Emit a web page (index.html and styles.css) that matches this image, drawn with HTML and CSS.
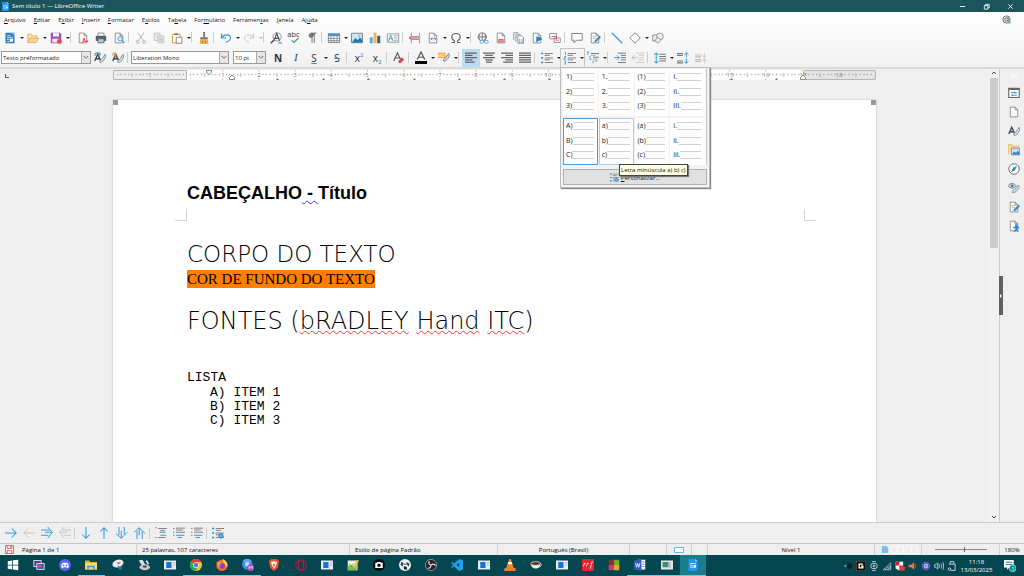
FILE: index.html
```html
<!DOCTYPE html>
<html lang="pt-BR">
<head>
<meta charset="utf-8">
<title>Sem título 1 — LibreOffice Writer</title>
<link rel="stylesheet" href="styles.css">
</head>
<body>
<svg class="sprite" aria-hidden="true">
<defs>
<g id="sheet"><path d="M3 1.500h6.500l3.500 3.500v9.500H3z" fill="#fafafa" stroke="#777"/><path d="M9.500 1.500V5H13" fill="none" stroke="#777"/></g>
<g id="new"><rect x="2" y="1" width="12" height="14" fill="#2b7fc3"/><path d="M10 1h4v4z" fill="#9ccbf0"/><path d="M4 5h5M4 7.500h8M4 10h3M4 12.500h8" stroke="#fff"/><rect x="8" y="9" width="4" height="3" fill="#fff"/></g>
<g id="open"><path d="M1 14V3h5l1 2h6v3" fill="#fbe0b6" stroke="#e8a33d"/><path d="M1 14l3-6h11.500l-3 6z" fill="#fcd79b" stroke="#e8a33d"/></g>
<g id="save"><path d="M1 1h12l2 2v12H1z" fill="#a34fb5"/><rect x="4" y="1.500" width="8" height="4.500" fill="#fff"/><rect x="3" y="9" width="10" height="5" fill="#f3e3f6"/><circle cx="12.500" cy="12.500" r="3.300" fill="#e64552"/></g>
<g id="pdf"><use href="#sheet"/><path d="M7 14c4-3 3-7 2-5s3 5 6 3" fill="none" stroke="#e23b3b" stroke-width="1.400"/></g>
<g id="print"><path d="M4 5V1.500h8V5" fill="#fff" stroke="#666"/><rect x="1" y="5" width="14" height="7" rx="1" fill="#5d6063"/><rect x="4" y="9" width="8" height="5.500" fill="#9dcbe9" stroke="#555"/></g>
<g id="preview"><use href="#sheet"/><circle cx="9.500" cy="9" r="3" fill="#d4eafa" stroke="#2f8fd3"/><path d="M12 11.500l3 3" stroke="#2f8fd3" stroke-width="1.500"/></g>
<g id="cut" fill="none" stroke="#b3b3b3" stroke-width="1.300"><path d="M4 1l7 10M12 1L5 11"/><circle cx="3.800" cy="13" r="2"/><circle cx="12.200" cy="13" r="2"/></g>
<g id="copy" fill="#e6e6e6" stroke="#bdbdbd"><path d="M1.500 1.500h8v10h-8z"/><path d="M6.500 5h8v9.500h-8z"/><path d="M8 8h5M8 10h5M8 12h5"/></g>
<g id="paste"><path d="M2 3h10v11.500H2z" fill="#fff" stroke="#e39a3c" stroke-width="1.300"/><path d="M4.500 4V2h5v2z" fill="#666"/><path d="M7 7h7.500v8H7z" fill="#fff" stroke="#666"/></g>
<g id="clone"><path d="M7 0h2.500v7H7z" fill="#777"/><path d="M3 7h10v3H3z" fill="#777"/><path d="M3 10h10l1 5.500H2z" fill="#f3a952"/><path d="M6 12v3.500M10 12v3.500" stroke="#b96c1c"/></g>
<g id="undo"><path d="M2 2v6h6M2 8c3-6 12-5 12 0 0 3-2 4-6 6" fill="none" stroke="#2f9bdc" stroke-width="1.500"/></g>
<g id="redo"><path d="M14 2v6H8M14 8C11 2 2 3 2 8c0 3 2 4 6 6" fill="none" stroke="#c4c4c4" stroke-width="1.200"/></g>
<g id="find"><path d="M5 12L9 2l4 10M7 8.500h5" fill="none" stroke="#444" stroke-width="1.400"/><circle cx="9.500" cy="6.500" r="5.500" fill="none" stroke="#777"/><path d="M5.500 10.500L1 15" stroke="#555" stroke-width="2"/><path d="M11 14.500h5" stroke="#2f8fd3" stroke-width="1.400"/></g>
<g id="spell"><text x="-1" y="6" font-size="10" fill="#333">abc</text><path d="M5 11l3 3 6-6" fill="none" stroke="#33a367" stroke-width="1.500"/></g>
<g id="pil"><path d="M12.500 1.500H6.500a3 3 0 000 6h1.500z" fill="#777"/><path d="M8 1.500v13M11 1.500v13M6 1.500h8" fill="none" stroke="#666" stroke-width="1.200"/></g>
<g id="table"><path d="M.5 2.500h15v11.500H.5z" fill="#fff" stroke="#666"/><path d="M0 2h16v3.500H0z" fill="#4596d1"/><path d="M0 8.500h16M0 11.500h16M4 5v9M8 5v9M12 5v9" stroke="#777"/></g>
<g id="image"><path d="M.7 1.700h14.600v12.600H.7z" fill="#c7e4f8" stroke="#666"/><path d="M1 14l5-6 3 3 3-4 3 4v3z" fill="#1f79bd"/><circle cx="11" cy="5" r="1.500" fill="#f1a840"/></g>
<g id="chart"><path d="M1 7h4v8H1z" fill="#5aaade"/><path d="M6 1h4v14H6z" fill="#f3b45c"/><path d="M11 5h4v10h-4z" fill="#555"/></g>
<g id="textbox"><path d="M.5 2.500h15v11H.5z" fill="#fff" stroke="#777"/><path d="M2 12L5 4l3 8M3 9h4" fill="none" stroke="#2585c8"/><path d="M9 5h5M9 8h5M9 11h5" stroke="#888"/></g>
<g id="break"><path d="M3 1v5h11V1M3 15v-5h11v5" fill="none" stroke="#777"/><path d="M0 8h15M3 6L.5 8 3 10" fill="none" stroke="#e23b3b" stroke-width="1.300"/></g>
<g id="field"><use href="#sheet"/><path d="M5 9h7M7 7L5 9l2 2M10 7l2 2-2 2" fill="none" stroke="#2585c8"/></g>
<g id="omega"><path d="M2 14h4v-2C0 8 2 2 8 2s8 6 2 10v2h4" fill="none" stroke="#666" stroke-width="1.400"/></g>
<g id="link"><circle cx="7" cy="6.500" r="5.500" fill="#eee" stroke="#666"/><path d="M2 6.500h10M7 1v11M4 2c-2 3-2 6 0 9M10 2c2 3 2 6 0 9" fill="none" stroke="#666"/><rect x="4" y="11" width="5" height="4" rx="2" fill="#fff" stroke="#2f8fd3"/><rect x="10" y="11" width="5" height="4" rx="2" fill="#fff" stroke="#2f8fd3"/></g>
<g id="footnote"><use href="#sheet"/><path d="M5 10h6v3H5z" fill="#f3a2a2" stroke="#e23b3b"/></g>
<g id="endnote"><path d="M1 11V1h6M4 13V3h6" fill="none" stroke="#777"/><path d="M6.500 5h5L14 7.500V15H6.500z" fill="#fff" stroke="#777"/><path d="M9 9v6M12 9v6" stroke="#2f8fd3"/></g>
<g id="bookmark"><use href="#sheet"/><path d="M7 6v8l3-2 5-2-2-3z" fill="#2585c8"/></g>
<g id="xref"><path d="M1 2h9v7H1zM7 8h8v6H7z" fill="#fff" stroke="#777"/><path d="M3 6h7v4" fill="none" stroke="#e23b3b"/><path d="M9 11h4" stroke="#e23b3b"/></g>
<g id="comment"><path d="M1 2h14v9H7l-3 3.500V11H1z" fill="#fff" stroke="#777" stroke-width="1.200"/></g>
<g id="track"><use href="#sheet"/><path d="M5 6h4M5 8.500h4" stroke="#e59a3c"/><path d="M7 14l1-3 6-6 2 2-6 6z" fill="#2f8fd3"/></g>
<g id="line"><path d="M1 1l14 14" stroke="#2f8fd3" stroke-width="1.500"/></g>
<g id="diamond"><path d="M8 1l7 7-7 7-7-7z" fill="#fff" stroke="#777" stroke-width="1.200"/></g>
<g id="draw" fill="#eee" stroke="#777"><path d="M1 4h8v8H1z"/><circle cx="10.500" cy="6" r="4.500"/><path d="M8 7l4 4-4 4-4-4z"/></g>
<g id="stylea"><path d="M1 12L5 3l4 9M3 9h5" fill="none" stroke="#444" stroke-width="1.800"/><path d="M8 14c-1-3 1-4 2-4l5-7c1 3 0 6-3 9-1 2-3 2-4 2z" fill="#cfe5f5" stroke="#777"/></g>
<g id="upd"><use href="#stylea"/><path d="M1 5c0-5 6-5 7-2M8 1v3H5" fill="none" stroke="#2f8fd3" stroke-width="1.400"/></g>
<g id="newst"><use href="#stylea"/><path d="M3 0v6M0 3h6M1 1l4 4M5 1L1 5" stroke="#f0a040" stroke-width="1.200"/></g>
<g id="clearf"><path d="M1 12L6 1l5 11M3 8h6" fill="none" stroke="#555" stroke-width="1.500"/><path d="M7 12l5-5 3 3-5 5H8z" fill="#e64552"/></g>
<g id="fcolor"><path d="M3 10L8 0l5 10M5 7h6" fill="none" stroke="#555" stroke-width="1.600"/><path d="M0 12h16v4H0z" fill="#000"/></g>
<g id="hl"><path d="M0 1h10v7H0z" fill="#f7a23b"/><text x="0" y="7" font-size="8" fill="#fff">ab</text><path d="M7 12c0-3 2-3 3-4l4-6c2 2 1 5-2 8-1 2-3 2-5 2z" fill="#ddd" stroke="#666"/><path d="M0 13h7v3H0z" fill="#fff"/></g>
<path id="al" d="M0 1.500h16M0 4.500h10M0 7.500h16M0 10.500h10M0 13.500h13" stroke="#606366" stroke-width="1.400"/>
<path id="ac" d="M0 1.500h16M3 4.500h10M0 7.500h16M3 10.500h10M4 13.500h8" stroke="#606366" stroke-width="1.400"/>
<path id="ar" d="M0 1.500h16M6 4.500h10M0 7.500h16M6 10.500h10M3 13.500h13" stroke="#606366" stroke-width="1.400"/>
<path id="aj" d="M0 1.500h16M0 4.500h16M0 7.500h16M0 10.500h16M0 13.500h16" stroke="#606366" stroke-width="1.400"/>
<g id="bul"><path d="M5 2h11M5 4.500h7M5 8h11M5 10.500h7M5 14h11" stroke="#777" stroke-width="1.200"/><path d="M0 1h3v2H0zM0 7h3v2H0zM0 13h3v2H0z" fill="#2f8fd3"/></g>
<g id="num"><path d="M5 2h11M5 4.500h7M5 8h11M5 10.500h7M5 14h11" stroke="#777" stroke-width="1.200"/><path d="M1 0h1v4M0 6h2v2H0v2h2M0 12h2v4H0" fill="none" stroke="#2f8fd3"/></g>
<g id="outl"><path d="M5 2h11M8 7h8M11 12h3" stroke="#777" stroke-width="1.300"/><path d="M5 4.500h7M8 9.500h6" stroke="#999"/><path d="M1 0v4M4 5v5h2M0 0h3M8 11v4" fill="none" stroke="#2f8fd3"/></g>
<g id="indent"><path d="M5 1.500h11M9 4.500h7M9 7.500h7M9 10.500h7M5 14h11" stroke="#777" stroke-width="1.300"/><path d="M0 7.500h7M4 4.500l3 3-3 3" fill="none" stroke="#2f9bdc" stroke-width="1.300"/></g>
<g id="outdent"><path d="M5 1.500h11M9 4.500h7M9 7.500h7M9 10.500h7M5 14h11" stroke="#ccc" stroke-width="1.300"/><path d="M0 7.500h7M3 4.500l-3 3 3 3" fill="none" stroke="#bbb" stroke-width="1.300"/></g>
<g id="spacing"><path d="M7 3h9M7 6h9M7 9h9M7 12h9" stroke="#777" stroke-width="1.300"/><path d="M3 1v14M0 4l3-3 3 3M0 12l3 3 3-3" fill="none" stroke="#2f9bdc" stroke-width="1.300"/></g>
<g id="parinc"><path d="M0 2h8M0 4.500h8M0 12h8M0 14.500h8" stroke="#777" stroke-width="1.400"/><path d="M12.500 7V1M10 3.500L12.500 1 15 3.500M12.500 9v6M10 12.500l2.500 2.500 2.500-2.500" fill="none" stroke="#2f9bdc" stroke-width="1.300"/></g>
<g id="pardec"><path d="M0 4h8M0 6.500h8M0 10h8M0 12.500h8" stroke="#bbb" stroke-width="1.400"/><path d="M12.500 1v6M10 4.500L12.500 7 15 4.500M12.500 15V9M10 11.500L12.500 9l2.500 2.500" fill="none" stroke="#bbb"/></g>
<g id="gear"><circle cx="12" cy="12" r="2.500" fill="#d4eafa" stroke="#2f8fd3" stroke-width="1.500"/><path d="M12 8v8M8 12h8" stroke="#2f8fd3"/></g>
<g id="custom"><use href="#bul"/><use href="#gear"/></g>
<path id="a-r" d="M0 8h15M9 2l6 6-6 6" fill="none" stroke="#2f9bdc" stroke-width="1.400"/>
<path id="a-l" d="M16 8H1M7 2L1 8l6 6" fill="none" stroke="#c2c2c2" stroke-width="1.300"/>
<path id="a-rr" d="M0 4h12M0 11h10M9 0l6 7H5M9 15l6-8" fill="none" stroke="#2f9bdc" stroke-width="1.300"/>
<path id="a-ll" d="M16 4H5M16 11H6M7 0L1 7h10M7 15L1 7" fill="none" stroke="#c2c2c2" stroke-width="1.200"/>
<path id="a-d" d="M8 0v15M3 10l5 5 5-5" fill="none" stroke="#2f9bdc" stroke-width="1.400"/>
<path id="a-u" d="M8 16V1M3 6l5-5 5 5" fill="none" stroke="#2f9bdc" stroke-width="1.400"/>
<path id="a-dd" d="M4 0v11M11 0v10M0 9l7 6V5M7 15l8-8" fill="none" stroke="#2f9bdc" stroke-width="1.300"/>
<path id="a-uu" d="M4 16V5M11 16V6M0 7l7-6v10M7 1l8 8" fill="none" stroke="#2f9bdc" stroke-width="1.300"/>
<g id="l1"><path d="M4 2h12M7 4.500h6M7 11h8M4 14h10M0 1h2M0 14h2" stroke="#777" stroke-width="1.200"/><path d="M6 7h8" stroke="#2f9bdc" stroke-width="1.500"/></g>
<g id="l2"><path d="M4 1.500h12M4 4h9M4 7h12M0 2h2M0 7h2" stroke="#777" stroke-width="1.200"/><path d="M0 11h2M4 11h11M6 14h6" stroke="#2f9bdc" stroke-width="1.400"/></g>
<path id="chev" d="M1 2l3 3 3-3" fill="none" stroke="#444"/>
<g id="s-prop"><path d="M1 2h14v12H1z" fill="#fff" stroke="#666" stroke-width="1.500"/><path d="M1 1h14v3H1z" fill="#666"/><path d="M4 7.500h8M4 11h8" stroke="#2f8fd3" stroke-width="1.200"/><path d="M9 6v3M6 9.500v3" stroke="#2f8fd3"/></g>
<g id="s-gal"><path d="M0 14V1h5l1 2h8v3" fill="#fbd9a8" stroke="#eda04a"/><path d="M4.500 5.500h11v9h-11z" fill="#cae6f8" stroke="#777"/><path d="M5 14l3-4 3 2 2-3 2 2v3z" fill="#2585c8"/></g>
<g id="s-nav"><circle cx="8" cy="8" r="7" fill="#fff" stroke="#666" stroke-width="1.200"/><path d="M12 4l-3 6-5 2 3-6z" fill="#2585c8"/></g>
<g id="s-eye"><path d="M0 5c3-4 8-4 11 0-3 4-8 4-11 0z" fill="#ddd" stroke="#666"/><circle cx="5.500" cy="5" r="2" fill="#2f8fd3"/><path d="M6 14c0-3 2-4 3-4l5-6c2 3 0 6-3 8-1 2-3 2-5 2z" fill="#cfe5f5" stroke="#777"/></g>
<g id="s-acc"><use href="#sheet"/><circle cx="11" cy="7.500" r="1.700" fill="#2585c8"/><path d="M7 10h8M11 9v4M11 12l-2.500 3.500M11 12l2.500 3.500" stroke="#2585c8" stroke-width="1.800"/></g>
<g id="app"><path d="M2 0h9l3 3v13H2z" fill="#2196f3"/><path d="M11 0l3 3h-3z" fill="#b9e0ff"/><path d="M4 6h8M4 8.500h4M4 11h8" stroke="#fff"/><path d="M9 8h3v3H9z" fill="#fff"/></g>
<g id="at"><circle cx="8" cy="8" r="6.500" fill="#ddd" stroke="#555" stroke-width="1.300"/><circle cx="8" cy="8" r="3" fill="none" stroke="#555" stroke-width="1.200"/><path d="M11 4v6l2 1" fill="none" stroke="#555"/><path d="M11 11h4v4h-4z" fill="#4aa8ea"/></g>
<g id="t-win" fill="#fff"><path d="M1 3l6-1v5.500H1zM8 1.800L15 1v6.500H8zM1 8.500h6V14l-6-1zM8 8.500h7V15l-7-1z"/></g>
<g id="t-desk"><path d="M1 2h10v8H1z" fill="#5a3e84" stroke="#fff"/><path d="M5 6h10v8H5z" fill="#315dbf" stroke="#fff"/><path d="M7 8h4v3H7z" fill="#e8547c"/></g>
<g id="t-disc"><circle cx="8" cy="8" r="8" fill="#5865f2"/><path d="M3 11c0-4 1-6 3-6h4c2 0 3 2 3 6-2 2-3 1-3 0H6c0 1-1 2-3 0z" fill="#fff"/><circle cx="6" cy="8.500" r="1.200" fill="#5865f2"/><circle cx="10" cy="8.500" r="1.200" fill="#5865f2"/></g>
<g id="t-fold"><path d="M0 2h6l1 2h9v10H0z" fill="#e5a92b"/><path d="M0 5h16v9H0z" fill="#ffd968"/><path d="M3 14V9h10v5h-2v-3H5v3z" fill="#3b93d8"/></g>
<g id="t-snip"><ellipse cx="8" cy="6" rx="7.500" ry="5" fill="#eee" transform="rotate(-20 8 6)"/><path d="M6 5l6-1-3 3z" fill="#d64541"/><path d="M8 9l5 5M13 9l-4 5" stroke="#3a83c2" stroke-width="1.500"/></g>
<g id="t-tool"><path d="M1 2l5-1 4 7-4 2z" fill="#ddd"/><ellipse cx="9" cy="11" rx="7" ry="4" fill="#c9c9c9"/><ellipse cx="9" cy="10" rx="3" ry="1.500" fill="#444"/><path d="M11 2l3 5" stroke="#eee" stroke-width="2"/></g>
<g id="t-exe"><path d="M0 2h16v12H0z" fill="#e7edf2"/><path d="M3 4h7v8H3z" fill="#1673d1"/><path d="M12 5h3M12 8h3" stroke="#9ab"/></g>
<g id="t-chrome"><circle cx="8" cy="8" r="8" fill="#fbc116"/><path d="M8 8L1 4a8 8 0 0114 0H8z" fill="#e33b2e"/><path d="M8 8L1 4a8 8 0 006 12l4-6z" fill="#2da94f"/><circle cx="8" cy="8" r="3.800" fill="#fff"/><circle cx="8" cy="8" r="3" fill="#3f7ee8"/></g>
<g id="t-ff"><circle cx="8" cy="8.500" r="7.500" fill="#ff6a2b"/><path d="M9 0c4 2 7 5 6 10-3-1-2-4-6-6z" fill="#ffd23e"/><circle cx="8" cy="9" r="3.800" fill="#8142d8"/><path d="M1 4c3-1 5 1 7 2-3 0-4 3-2 5-3 0-5-3-5-7z" fill="#ff9c2b"/></g>
<g id="t-chm"><circle cx="7" cy="7" r="7" fill="#3e8ef0"/><path d="M7 7L1 3a7 7 0 0112 0z" fill="#60a7f5"/><circle cx="7" cy="7" r="3" fill="#bfe0ff"/><circle cx="11.500" cy="11.500" r="4.500" fill="#ab47bc"/><path d="M9.500 13.500v-4l2 2 2-2v4" fill="none" stroke="#fff"/></g>
<g id="t-brave"><path d="M4 0h8l3 3-2 9-5 4-5-4-2-9z" fill="#f1502b"/><path d="M4 4l4-1 4 1-1 4-3 5-3-5z" fill="#fff"/><path d="M6 6l2 1 2-1-2 5z" fill="#f1502b"/></g>
<g id="t-opera"><circle cx="8" cy="8" r="7" fill="none" stroke="#a81c3c" stroke-width="1.600"/><ellipse cx="8" cy="8" rx="3.500" ry="6.500" fill="none" stroke="#a81c3c" stroke-width="1.600"/></g>
<g id="t-npp"><path d="M1 2h13v13H1z" fill="#eef4e4"/><path d="M1 9h12v6H1z" fill="#77c043"/><path d="M3 7l3 2 3-3" fill="none" stroke="#555"/><path d="M8 12l5-11 3 1-5 10z" fill="#e9b949"/></g>
<g id="t-cam"><circle cx="8" cy="8" r="8" fill="#0a0a12"/><path d="M3 5h2l1-1h4l1 1h2v7H3z" fill="#fff"/><circle cx="8" cy="8.300" r="2.200" fill="#111"/></g>
<g id="t-dog"><circle cx="8" cy="8" r="8" fill="#e9f4f4"/><path d="M3 4l3 1-1 5-3-2zM10 4l4 2-1 4-3-3z" fill="#3a3f44"/><path d="M6 10h4l1 4H7z" fill="#222"/><circle cx="8" cy="7" r="1" fill="#111"/></g>
<g id="t-obs"><circle cx="8" cy="8" r="7.500" fill="#26262a" stroke="#aaa"/><path d="M8 8c-3-1-4-3-2-5M8 8c3-2 5-1 6 1M8 8c0 3-2 5-4 4" fill="none" stroke="#ddd" stroke-width="1.600"/></g>
<g id="t-code"><path d="M11 0l5 2v12l-5 2-7-6-3 2-1-1 3-3-3-3 1-1 3 2z" fill="#22a0ee"/><path d="M11 5v6L7 8z" fill="#04454f"/></g>
<g id="t-vlc"><path d="M7 0h2l4 12H3z" fill="#f58220"/><path d="M5.800 4h4.400l1 3H4.800z" fill="#fff"/><path d="M1 12h14l1 4H0z" fill="#f58220"/></g>
<g id="t-java"><path d="M1 6c0 9 13 9 13 0z" fill="#eee"/><ellipse cx="7.500" cy="6" rx="6.500" ry="2.500" fill="#5b3415" stroke="#eee"/><path d="M13 6c4 0 2 5-2 5" fill="none" stroke="#ddd"/></g>
<g id="t-pdf"><rect width="16" height="16" rx="1" fill="#e6252e"/><path d="M2 10l1-4h2M6 10l1-4h2M11 13l2-9h2" stroke="#fff" fill="none"/></g>
<g id="t-cube"><path d="M1 1h7v7H1z" fill="#8d2f24"/><path d="M8 1h7v7H8z" fill="#6fae2c"/><path d="M1 8h7v7H1z" fill="#c93a78"/><path d="M8 8h7v7H8z" fill="#e0a72c"/></g>
<g id="t-word"><path d="M5 1h10v13H5z" fill="#fff"/><path d="M11 4h3M11 7h3M11 10h3" stroke="#2b579a"/><path d="M0 2l10-2v16L0 14z" fill="#2b5fb4"/><path d="M2 5l1.500 6L5 6l1.500 5L8 5" fill="none" stroke="#fff"/></g>
<g id="t-mon"><path d="M0 2h16v12H0z" fill="#e3e9e6"/><path d="M2 4h8v7H2z" fill="#3d8d72"/><path d="M12 4v8" stroke="#889"/></g>
<g id="y-1"><path d="M2 8h12M10 4l4 4-4 4M8 3v10" stroke="#111c" fill="none" stroke-width="2"/><circle cx="4" cy="8" r="2" fill="#888"/></g>
<g id="y-2"><rect width="16" height="16" rx="2" fill="#111" stroke="#e67a3c"/><path d="M11 5H5v6h6V8H8" fill="none" stroke="#fff" stroke-width="2"/></g>
<g id="y-3" fill="none" stroke="#dfe9ea" stroke-width="1.300"><rect x="3" y="4" width="10" height="8" rx="3"/><path d="M5 1h6M5 15h6"/><circle cx="8" cy="8" r="1.500"/></g>
<g id="y-4" fill="none" stroke="#dfe9ea"><path d="M2 14L14 3v11zM6 14c0-2 3-5 8-5M9 14c0-1 2-3 5-3"/></g>
<g id="y-5"><path d="M1 1h12v11l-6 3-6-3z" fill="#fff"/><path d="M1 1h6v6H1zM7 7h6v5l-6 3z" fill="#c81f2d"/><circle cx="12" cy="12" r="4" fill="#e23b3b"/></g>
<g id="y-6"><path d="M1 6h4l5-4v12l-5-4H1z" fill="#ff6b3a"/><path d="M12 5v6" stroke="#b33" stroke-width="2"/></g>
<g id="y-7"><circle cx="8" cy="8" r="7" fill="#6257b8"/><circle cx="8" cy="8" r="3.500" fill="#8ed3f0"/><circle cx="8" cy="8" r="1.500" fill="#d24e87"/></g>
<g id="y-8" fill="none" stroke="#dfe9ea" stroke-width="1.200"><path d="M1 6h2l3-3v10l-3-3H1zM8 5c1 2 1 4 0 6M11 4c2 2 2 6 0 8M14 2c2 4 2 8 0 12"/></g>
<g id="y-9" fill="none" stroke="#dfe9ea" stroke-width="1.300"><path d="M5 5V1h6v4M3 5h10v10H6"/><circle cx="4" cy="13" r="2"/></g>
<g id="note"><path d="M0 0h13v10H7l-3 3v-3H0z" fill="#fff"/><path d="M2 3h9M2 6h9" stroke="#064650"/><circle cx="11.500" cy="11" r="4.500" fill="#14888f" stroke="#8fd"/><text x="10" y="14" font-size="7" fill="#fff">1</text></g>
<pattern id="ticks" x="73" y="0" width="36.200" height="10" patternUnits="userSpaceOnUse"><path d="M4 4.500h1M7 4.500h1M11 4.500h1M15 4.500h1M22 4.500h1M26 4.500h1M29 4.500h1M33 4.500h1" stroke="#999" stroke-width="1.500"/><path d="M18.500 3v4" stroke="#aaa"/><path d="M.5 0v1.500M.5 8.500V10" stroke="#bbb"/></pattern>
</defs>
</svg>

<header class="titlebar">
  <svg class="icon-s" viewBox="0 0 16 16"><use href="#app"/></svg>
  <span class="window-title">Sem título 1 — LibreOffice Writer</span>
  <button class="winbtn" aria-label="Minimizar"><svg viewBox="0 0 8 8"><path d="M1 4h6" stroke="#fff"/></svg></button>
  <button class="winbtn" aria-label="Restaurar"><svg viewBox="0 0 8 8"><path d="M1.500 3h4v4h-4zM3 3V1.500h4v4H5.500" fill="none" stroke="#fff"/></svg></button>
  <button class="winbtn" aria-label="Fechar"><svg viewBox="0 0 8 8"><path d="M1.500 1.500l5 5M6.500 1.500l-5 5" stroke="#fff"/></svg></button>
</header>

<div class="chrome">
<nav class="menubar">
  <button><u>A</u>rquivo</button><button><u>E</u>ditar</button><button>E<u>x</u>ibir</button><button><u>I</u>nserir</button><button><u>F</u>ormatar</button><button>E<u>s</u>tilos</button><button>Ta<u>b</u>ela</button><button>For<u>m</u>ulário</button><button>Ferramen<u>t</u>as</button><button><u>J</u>anela</button><button>Aj<u>u</u>da</button>
  <button class="update" aria-label="Atualização disponível"><svg class="icon-s" viewBox="0 0 16 16"><use href="#at"/></svg></button>
</nav>

<div class="toolbar standard">
  <button class="tool" aria-label="Novo"><svg viewBox="0 0 16 16"><use href="#new"/></svg></button><button class="drop" aria-label="Mais modelos"></button>
  <button class="tool" aria-label="Abrir"><svg viewBox="0 0 16 16"><use href="#open"/></svg></button><button class="drop" aria-label="Recentes"></button>
  <button class="tool" aria-label="Salvar"><svg viewBox="0 0 16 16"><use href="#save"/></svg></button><button class="drop" aria-label="Salvar como"></button>
  <i class="sep"></i>
  <button class="tool" aria-label="Exportar PDF"><svg viewBox="0 0 16 16"><use href="#pdf"/></svg></button>
  <button class="tool" aria-label="Imprimir"><svg viewBox="0 0 16 16"><use href="#print"/></svg></button>
  <button class="tool" aria-label="Visualizar"><svg viewBox="0 0 16 16"><use href="#preview"/></svg></button>
  <i class="sep"></i>
  <button class="tool" aria-label="Cortar"><svg viewBox="0 0 16 16"><use href="#cut"/></svg></button>
  <button class="tool" aria-label="Copiar"><svg viewBox="0 0 16 16"><use href="#copy"/></svg></button>
  <button class="tool" aria-label="Colar"><svg viewBox="0 0 16 16"><use href="#paste"/></svg></button><button class="drop" aria-label="Colar especial"></button>
  <i class="sep"></i>
  <button class="tool" aria-label="Clonar formatação"><svg viewBox="0 0 16 16"><use href="#clone"/></svg></button>
  <i class="sep"></i>
  <button class="tool" aria-label="Desfazer"><svg viewBox="0 0 16 16"><use href="#undo"/></svg></button><button class="drop" aria-label="Histórico"></button>
  <button class="tool" aria-label="Refazer"><svg viewBox="0 0 16 16"><use href="#redo"/></svg></button><button class="drop off" aria-label="Histórico de refazer"></button>
  <i class="sep"></i>
  <button class="tool" aria-label="Localizar"><svg viewBox="0 0 16 16"><use href="#find"/></svg></button>
  <button class="tool" aria-label="Ortografia"><svg viewBox="0 0 16 16"><use href="#spell"/></svg></button>
  <button class="tool" aria-label="Marcas"><svg viewBox="0 0 16 16"><use href="#pil"/></svg></button>
  <i class="sep"></i>
  <button class="tool" aria-label="Tabela"><svg viewBox="0 0 16 16"><use href="#table"/></svg></button><button class="drop" aria-label="Tamanho da tabela"></button>
  <button class="tool" aria-label="Figura"><svg viewBox="0 0 16 16"><use href="#image"/></svg></button>
  <button class="tool" aria-label="Gráfico"><svg viewBox="0 0 16 16"><use href="#chart"/></svg></button>
  <button class="tool" aria-label="Caixa de texto"><svg viewBox="0 0 16 16"><use href="#textbox"/></svg></button>
  <i class="sep"></i>
  <button class="tool" aria-label="Quebra de página"><svg viewBox="0 0 16 16"><use href="#break"/></svg></button>
  <button class="tool" aria-label="Campo"><svg viewBox="0 0 16 16"><use href="#field"/></svg></button><button class="drop" aria-label="Mais campos"></button>
  <button class="tool" aria-label="Símbolo"><svg viewBox="0 0 16 16"><use href="#omega"/></svg></button><button class="drop" aria-label="Mais símbolos"></button>
  <i class="sep"></i>
  <button class="tool" aria-label="Hiperlink"><svg viewBox="0 0 16 16"><use href="#link"/></svg></button>
  <button class="tool" aria-label="Nota de rodapé"><svg viewBox="0 0 16 16"><use href="#footnote"/></svg></button>
  <button class="tool" aria-label="Nota de fim"><svg viewBox="0 0 16 16"><use href="#endnote"/></svg></button>
  <button class="tool" aria-label="Marcador de página"><svg viewBox="0 0 16 16"><use href="#bookmark"/></svg></button>
  <button class="tool" aria-label="Referência"><svg viewBox="0 0 16 16"><use href="#xref"/></svg></button>
  <i class="sep"></i>
  <button class="tool" aria-label="Anotação"><svg viewBox="0 0 16 16"><use href="#comment"/></svg></button>
  <button class="tool" aria-label="Controle de alterações"><svg viewBox="0 0 16 16"><use href="#track"/></svg></button>
  <i class="sep"></i>
  <button class="tool" aria-label="Linha"><svg viewBox="0 0 16 16"><use href="#line"/></svg></button>
  <button class="tool" aria-label="Formas"><svg viewBox="0 0 16 16"><use href="#diamond"/></svg></button><button class="drop" aria-label="Mais formas"></button>
  <button class="tool" aria-label="Desenho"><svg viewBox="0 0 16 16"><use href="#draw"/></svg></button>
</div>

<div class="toolbar formatting">
  <span class="combo combo-style"><select aria-label="Estilo de parágrafo"><option>Texto préformatado</option></select><svg viewBox="0 0 8 8"><use href="#chev"/></svg></span>
  <button class="tool" aria-label="Atualizar estilo"><svg viewBox="0 0 16 16"><use href="#upd"/></svg></button>
  <button class="tool" aria-label="Novo estilo"><svg viewBox="0 0 16 16"><use href="#newst"/></svg></button>
  <i class="sep"></i>
  <span class="combo combo-font"><select aria-label="Nome da fonte"><option>Liberation Mono</option></select><svg viewBox="0 0 8 8"><use href="#chev"/></svg></span>
  <span class="combo combo-size"><select aria-label="Tamanho da fonte"><option>10 pt</option></select><svg viewBox="0 0 8 8"><use href="#chev"/></svg></span>
  <button class="tool glyph bold">N</button>
  <button class="tool glyph ital">I</button>
  <button class="tool glyph under">S</button><button class="drop" aria-label="Tipos de sublinhado"></button>
  <button class="tool glyph strike">S</button>
  <i class="sep"></i>
  <button class="tool glyph">x<sup>2</sup></button>
  <button class="tool glyph">x<sub>2</sub></button>
  <i class="sep"></i>
  <button class="tool" aria-label="Limpar formatação"><svg viewBox="0 0 16 16"><use href="#clearf"/></svg></button>
  <i class="sep"></i>
  <button class="tool" aria-label="Cor da fonte"><svg viewBox="0 0 16 16"><use href="#fcolor"/></svg></button><button class="drop" aria-label="Cores da fonte"></button>
  <button class="tool" aria-label="Realce"><svg viewBox="0 0 16 16"><use href="#hl"/></svg></button><button class="drop" aria-label="Cores do realce"></button>
  <i class="sep"></i>
  <button class="tool active" aria-label="À esquerda"><svg viewBox="0 0 16 16"><use href="#al"/></svg></button>
  <button class="tool" aria-label="Centralizar"><svg viewBox="0 0 16 16"><use href="#ac"/></svg></button>
  <button class="tool" aria-label="À direita"><svg viewBox="0 0 16 16"><use href="#ar"/></svg></button>
  <button class="tool" aria-label="Justificar"><svg viewBox="0 0 16 16"><use href="#aj"/></svg></button>
  <i class="sep"></i>
  <button class="tool" aria-label="Marcadores"><svg viewBox="0 0 16 16"><use href="#bul"/></svg></button><button class="drop" aria-label="Tipos de marcador"></button>
  <div class="split-open">
    <button class="tool" aria-label="Numeração"><svg viewBox="0 0 16 16"><use href="#num"/></svg></button><button class="drop" aria-label="Tipos de numeração"></button>
    <div class="popup">
      <div class="formats">
        <button class="format"><span>1)</span><span>2)</span><span>3)</span></button>
        <button class="format"><span>1.</span><span>2.</span><span>3.</span></button>
        <button class="format"><span>(1)</span><span>(2)</span><span>(3)</span></button>
        <button class="format"><span>I.</span><span>II.</span><span>III.</span></button>
        <button class="format chosen"><span>A)</span><span>B)</span><span>C)</span></button>
        <button class="format hover"><span>a)</span><span>b)</span><span>c)</span></button>
        <button class="format"><span>(a)</span><span>(b)</span><span>(c)</span></button>
        <button class="format"><span>i.</span><span>ii.</span><span>iii.</span></button>
      </div>
      <button class="customize"><svg viewBox="0 0 16 16"><use href="#custom"/></svg><span><u>P</u>ersonalizar...</span></button>
      <div class="tooltip" role="tooltip">Letra minúscula a) b) c)</div>
    </div>
  </div>
  <button class="tool" aria-label="Estrutura de tópicos"><svg viewBox="0 0 16 16"><use href="#outl"/></svg></button><button class="drop" aria-label="Tipos de estrutura"></button>
  <i class="sep"></i>
  <button class="tool" aria-label="Aumentar recuo"><svg viewBox="0 0 16 16"><use href="#indent"/></svg></button>
  <button class="tool" aria-label="Diminuir recuo"><svg viewBox="0 0 16 16"><use href="#outdent"/></svg></button>
  <i class="sep"></i>
  <button class="tool" aria-label="Entrelinhas"><svg viewBox="0 0 16 16"><use href="#spacing"/></svg></button><button class="drop" aria-label="Opções de entrelinhas"></button>
  <button class="tool" aria-label="Aumentar espaçamento"><svg viewBox="0 0 16 16"><use href="#parinc"/></svg></button>
  <button class="tool" aria-label="Diminuir espaçamento"><svg viewBox="0 0 16 16"><use href="#pardec"/></svg></button>
</div>
</div>

<main class="work">
  <div class="canvas">
    <div class="ruler-row">
      <svg class="tabmark" viewBox="0 0 4 4"><path d="M.5 0v3.500H4" fill="none" stroke="#555"/></svg>
      <svg class="ruler" viewBox="0 0 763 12">
        <rect x="73" width="617" height="10" fill="#fff"/>
        <rect width="763" height="10" fill="url(#ticks)"/>
        <rect x=".5" y=".5" width="73" height="9" rx="1" fill="none" stroke="#b5b5b5"/>
        <rect x="690.500" y=".5" width="72" height="9" rx="1" fill="#0000000a" stroke="#b5b5b5"/>
        <g class="ruler-num"><text x="37" y="7">1</text><text x="110" y="7">1</text><text x="146" y="7">2</text><text x="182" y="7">3</text><text x="218" y="7">4</text><text x="254" y="7">5</text><text x="291" y="7">6</text><text x="327" y="7">7</text><text x="363" y="7">8</text><text x="399" y="7">9</text><text x="435" y="7">10</text><text x="472" y="7">11</text><text x="508" y="7">12</text><text x="544" y="7">13</text><text x="580" y="7">14</text><text x="617" y="7">15</text><text x="653" y="7">16</text><text x="690" y="7">17</text><text x="726" y="7">18</text></g>
        <path d="M93.500.5h5v2l-2.500 2-2.500-2zM116.500 9.500v-2l2.500-2.500 2.500 2.500v2zM687.500 9.500v-2l2.500-2.500 2.500 2.500v2z" fill="#fff" stroke="#888"/>
        <path d="M163 10l1.500-2 1.500 2zM209 10l1.500-2 1.500 2zM254 10l1.500-2 1.500 2zM300 10l1.500-2 1.500 2zM345 10l1.500-2 1.500 2zM390 10l1.500-2 1.500 2zM435 10l1.500-2 1.500 2zM617 10l1.500-2 1.500 2zM662 10l1.500-2 1.500 2z" fill="#777"/>
      </svg>
    </div>
    <article class="page">
      <div class="anchors"><i></i><i></i></div>
      <h1>CABEÇALHO<span class="grammar"> - </span>Título</h1>
      <div class="margins"><i></i><i></i></div>
      <div class="body-text">
        <p class="hand">CORPO DO TEXTO</p>
        <p class="shaded"><mark>COR DE FUNDO DO TEXTO</mark></p>
        <p class="hand second">FONTES (<span class="typo">bRADLEY</span> <span class="typo">Hand</span> <span class="typo">ITC</span>)</p>
        <div class="mono">
          <p>LISTA</p>
          <ol><li>A) ITEM 1</li><li>B) ITEM 2</li><li>C) ITEM 3</li></ol>
        </div>
      </div>
    </article>
  </div>
  <div class="scroll">
    <button aria-label="Rolar para cima"><svg viewBox="0 0 8 8"><path d="M2 5l2-2 2 2" fill="none" stroke="#444"/></svg></button>
    <div class="track"><div class="thumb"></div></div>
    <button aria-label="Rolar para baixo"><svg viewBox="0 0 8 8"><path d="M2 3l2 2 2-2" fill="none" stroke="#444"/></svg></button>
  </div>
  <aside class="sidebar">
    <button class="handle" aria-label="Mostrar barra lateral"></button>
    <button class="tab" aria-label="Configurações"><svg viewBox="0 0 16 16"><path d="M4 6h8M4 9h8" stroke="#fff" stroke-width="1.500"/></svg></button>
    <button class="tab" aria-label="Propriedades"><svg viewBox="0 0 16 16"><use href="#s-prop"/></svg></button>
    <button class="tab" aria-label="Página"><svg viewBox="0 0 16 16"><use href="#sheet"/></svg></button>
    <button class="tab" aria-label="Estilos"><svg viewBox="0 0 16 16"><use href="#stylea"/></svg></button>
    <button class="tab" aria-label="Galeria"><svg viewBox="0 0 16 16"><use href="#s-gal"/></svg></button>
    <button class="tab" aria-label="Navegador"><svg viewBox="0 0 16 16"><use href="#s-nav"/></svg></button>
    <button class="tab" aria-label="Inspetor de estilos"><svg viewBox="0 0 16 16"><use href="#s-eye"/></svg></button>
    <button class="tab" aria-label="Gerenciar alterações"><svg viewBox="0 0 16 16"><use href="#track"/></svg></button>
    <button class="tab" aria-label="Acessibilidade"><svg viewBox="0 0 16 16"><use href="#s-acc"/></svg></button>
  </aside>
</main>

<div class="toolbar listbar">
  <button class="tool" aria-label="Rebaixar"><svg viewBox="0 0 16 16"><use href="#a-r"/></svg></button>
  <button class="tool" aria-label="Promover"><svg viewBox="0 0 16 16"><use href="#a-l"/></svg></button>
  <button class="tool" aria-label="Rebaixar com subitens"><svg viewBox="0 0 16 16"><use href="#a-rr"/></svg></button>
  <button class="tool" aria-label="Promover com subitens"><svg viewBox="0 0 16 16"><use href="#a-ll"/></svg></button>
  <i class="sep"></i>
  <button class="tool" aria-label="Mover para baixo"><svg viewBox="0 0 16 16"><use href="#a-d"/></svg></button>
  <button class="tool" aria-label="Mover para cima"><svg viewBox="0 0 16 16"><use href="#a-u"/></svg></button>
  <button class="tool" aria-label="Mover para baixo com subitens"><svg viewBox="0 0 16 16"><use href="#a-dd"/></svg></button>
  <button class="tool" aria-label="Mover para cima com subitens"><svg viewBox="0 0 16 16"><use href="#a-uu"/></svg></button>
  <i class="sep"></i>
  <button class="tool" aria-label="Entrada sem número"><svg viewBox="0 0 16 16"><use href="#l1"/></svg></button>
  <button class="tool" aria-label="Reiniciar numeração"><svg viewBox="0 0 16 16"><use href="#l2"/></svg></button>
  <button class="tool" aria-label="Adicionar à lista"><svg viewBox="0 0 16 16"><use href="#l2"/></svg></button>
  <i class="sep"></i>
  <button class="tool" aria-label="Editar lista"><svg viewBox="0 0 16 16"><use href="#custom"/></svg></button>
</div>

<footer class="status">
  <div class="page-no"><svg class="icon-s" viewBox="0 0 16 16"><path d="M1 1h14v14H1z" fill="#fff" stroke="#dc4a43" stroke-width="1.500"/><path d="M4 1v5h8V1M4 15v-5h8v5M10 2v3" fill="none" stroke="#dc4a43" stroke-width="1.500"/></svg><span>Página 1 de 1</span></div>
  <div>25 palavras, 107 caracteres</div>
  <div>Estilo de página Padrão</div>
  <div class="mid">Português (Brasil)</div>
  <div></div>
  <div class="mid"><svg class="selmode" viewBox="0 0 10 6"><path d="M.5.5h9v5h-9z" fill="#fff" stroke="#6fb1e2"/></svg></div>
  <div></div>
  <div class="mid">Nível 1</div>
  <div class="views"><svg viewBox="0 0 40 10"><path d="M1 1h5l2 2v6H1z" fill="#7dbcec"/><path d="M11 1h6v8h-6zM19 1h6v8h-6zM28 1h6v8h-6zM34 1h6v8h-6z" fill="none" stroke="#fafafa"/></svg></div>
  <div class="mid"><input type="range" min="0" max="100" value="58" aria-label="Zoom"></div>
  <div class="mid last">180%</div>
</footer>

<div class="taskbar">
  <nav class="apps">
    <button aria-label="Iniciar"><svg viewBox="0 0 16 16"><use href="#t-win"/></svg></button>
    <button aria-label="Área de trabalho"><svg viewBox="0 0 16 16"><use href="#t-desk"/></svg></button>
    <button aria-label="Discord"><svg viewBox="0 0 16 16"><use href="#t-disc"/></svg></button>
    <button class="running" aria-label="Arquivos"><svg viewBox="0 0 16 16"><use href="#t-fold"/></svg></button>
    <button aria-label="Captura"><svg viewBox="0 0 16 16"><use href="#t-snip"/></svg></button>
    <button aria-label="Ferramenta"><svg viewBox="0 0 16 16"><use href="#t-tool"/></svg></button>
    <button aria-label="Programa"><svg viewBox="0 0 16 16"><use href="#t-exe"/></svg></button>
    <button class="running" aria-label="Chrome"><svg viewBox="0 0 16 16"><use href="#t-chrome"/></svg></button>
    <button class="running" aria-label="Firefox"><svg viewBox="0 0 16 16"><use href="#t-ff"/></svg></button>
    <button class="running" aria-label="Chromium"><svg viewBox="0 0 16 16"><use href="#t-chm"/></svg></button>
    <button aria-label="Brave"><svg viewBox="0 0 16 16"><use href="#t-brave"/></svg></button>
    <button aria-label="Opera"><svg viewBox="0 0 16 16"><use href="#t-opera"/></svg></button>
    <button aria-label="Programa"><svg viewBox="0 0 16 16"><use href="#t-exe"/></svg></button>
    <button aria-label="Notepad++"><svg viewBox="0 0 16 16"><use href="#t-npp"/></svg></button>
    <button aria-label="Câmera"><svg viewBox="0 0 16 16"><use href="#t-cam"/></svg></button>
    <button aria-label="DBeaver"><svg viewBox="0 0 16 16"><use href="#t-dog"/></svg></button>
    <button aria-label="OBS"><svg viewBox="0 0 16 16"><use href="#t-obs"/></svg></button>
    <button aria-label="VS Code"><svg viewBox="0 0 16 16"><use href="#t-code"/></svg></button>
    <button aria-label="Programa"><svg viewBox="0 0 16 16"><use href="#t-exe"/></svg></button>
    <button aria-label="VLC"><svg viewBox="0 0 16 16"><use href="#t-vlc"/></svg></button>
    <button aria-label="Java"><svg viewBox="0 0 16 16"><use href="#t-java"/></svg></button>
    <button aria-label="Programa"><svg viewBox="0 0 16 16"><use href="#t-exe"/></svg></button>
    <button aria-label="PDF"><svg viewBox="0 0 16 16"><use href="#t-pdf"/></svg></button>
    <button aria-label="Cubo"><svg viewBox="0 0 16 16"><use href="#t-cube"/></svg></button>
    <button class="running" aria-label="Word"><svg viewBox="0 0 16 16"><use href="#t-word"/></svg></button>
    <button class="running" aria-label="Monitor"><svg viewBox="0 0 16 16"><use href="#t-mon"/></svg></button>
    <button class="running current" aria-label="Writer"><svg viewBox="0 0 16 16"><use href="#app"/></svg></button>
  </nav>
  <div class="tray">
    <svg viewBox="0 0 16 16"><use href="#y-1"/></svg><svg viewBox="0 0 16 16"><use href="#y-2"/></svg><svg viewBox="0 0 16 16"><use href="#y-3"/></svg><svg viewBox="0 0 16 16"><use href="#y-4"/></svg><svg viewBox="0 0 16 16"><use href="#y-5"/></svg><svg viewBox="0 0 16 16"><use href="#y-6"/></svg><svg viewBox="0 0 16 16"><use href="#y-7"/></svg><svg viewBox="0 0 16 16"><use href="#y-8"/></svg><svg viewBox="0 0 16 16"><use href="#y-9"/></svg>
  </div>
  <div class="clock"><span>11:18</span><span>13/03/2025</span></div>
  <button class="notify" aria-label="Notificações"><svg viewBox="0 0 16 16"><use href="#note"/></svg></button>
</div>
</body>
</html>
```

FILE: styles.css
```css
* { box-sizing: border-box; }
body {
  margin: 0;
  height: 100vh;
  display: flex;
  flex-direction: column;
  overflow: hidden;
  background: #efefef;
  color: #111;
  font: 6px/8px "Segoe UI", "Open Sans", sans-serif;
}
button {
  margin: 0;
  padding: 0;
  border: 0;
  background: none;
  color: inherit;
  font: inherit;
}
h1, p, ol { margin: 0; padding: 0; font-weight: normal; }
svg { display: block; }
.sprite { position: absolute; width: 0; height: 0; }
.icon-s { width: 9px; height: 9px; flex: none; }

/* window title */
.titlebar {
  flex: none;
  display: flex;
  align-items: center;
  height: 12px;
  padding: 0 2px 0 1px;
  background: #1b545c;
  color: #fff;
}
.window-title { flex: 1; padding-left: 2px; }
.winbtn { width: 24px; display: flex; justify-content: center; }
.winbtn svg { width: 7px; height: 7px; }

/* menus and toolbars */
.chrome {
  flex: none;
  background: linear-gradient(#fff, #f1f1f1);
  border-bottom: 2px solid #dadada;
}
.menubar {
  display: flex;
  align-items: center;
  gap: 8px;
  height: 15px;
  padding: 0 13px 0 4px;
}
.menubar u, .customize u { text-decoration-thickness: 1px; text-underline-offset: 1px; }
.update { margin-left: auto; }
.toolbar { display: flex; align-items: center; }
.standard { height: 21px; padding-left: 1px; }
.formatting { height: 19px; padding-left: 1px; }
.tool {
  flex: none;
  width: 18px;
  height: 18px;
  display: flex;
  align-items: center;
  justify-content: center;
}
.tool svg { width: 12px; height: 12px; overflow: visible; }
.tool.active { background: #bcdcf4; }
.drop {
  flex: none;
  width: 5px;
  height: 18px;
  display: flex;
  align-items: center;
  justify-content: center;
}
.drop::before {
  content: "";
  border: 2px solid transparent;
  border-top-color: #222;
  border-bottom: 0;
}
.drop.off::before { border-top-color: #bbb; }
.sep { flex: none; width: 4px; height: 11px; border-left: 1px solid #ccc; }
.glyph { font-size: 10px; line-height: 12px; color: #333; }
.bold { font-weight: bold; }
.ital { font-style: italic; font-family: "Liberation Serif", serif; }
.under { text-decoration: underline #2f8fd3; }
.strike { text-decoration: line-through #2f8fd3; }
.glyph sup, .glyph sub { font-size: 6px; line-height: 6px; color: #1c78bd; }
.glyph sup { align-self: flex-start; padding-top: 3px; }
.glyph sub { align-self: flex-end; padding-bottom: 2px; }
.combo {
  flex: none;
  position: relative;
  height: 13px;
  border: 1px solid #9a9a9a;
  background: #fff;
}
.combo select {
  appearance: none;
  width: 100%;
  height: 11px;
  padding: 0 1px;
  border: 0;
  background: none;
  color: #222;
  font: inherit;
}
.combo svg {
  position: absolute;
  top: 0;
  right: 0;
  width: 9px;
  height: 11px;
  padding: 1px;
  background: #e6e6e6;
  border-left: 1px solid #aaa;
  pointer-events: none;
}
.combo-style { width: 90px; }
.combo-font { width: 98px; }
.combo-size { width: 33px; margin: 0 3px 0 4px; }

/* numbering drop-down */
.split-open {
  position: relative;
  display: flex;
  border: 1px solid #c4c4c4;
  border-bottom: 0;
  margin: 0 -1px;
}
.popup {
  position: absolute;
  z-index: 2;
  top: 18px;
  left: -1px;
  width: 150px;
  padding: 1px 2px 2px;
  border: 1px solid #bbb;
  background: #f2f2f2;
  box-shadow: 1px 1px 1px #888;
}
.formats {
  display: grid;
  grid-template-columns: repeat(4, 1fr);
  gap: 2px 1px;
  padding-right: 1px;
  border-right: 1px solid #ccc;
}
.format {
  display: flex;
  flex-direction: column;
  justify-content: space-between;
  height: 47px;
  padding: 2px 3px 4px 2px;
  border: 1px solid #fff;
  background: #fff;
  font-size: 7px;
  color: #222;
}
.format span { display: flex; align-items: center; height: 10px; width: 100%; }
.format span::after {
  content: "";
  flex: 1;
  height: 6px;
  border: 1px solid #d2d2d2;
  border-width: 1px 0;
}
.format.chosen { border-color: #4c9bd6; }
.format.hover { border-color: #a9cfec; }
.customize {
  width: 100%;
  height: 16px;
  margin-top: 4px;
  padding-top: 1px;
  display: flex;
  align-items: center;
  justify-content: center;
  gap: 2px;
  border: 1px solid #b2b2b2;
  background: #e1e1e1;
}
.customize svg { width: 9px; height: 9px; }
.tooltip {
  position: absolute;
  left: 58px;
  top: 96px;
  padding: 1px;
  border: 1px solid #444;
  background: #ffffe1;
  box-shadow: 1px 1px 1px #777;
  white-space: nowrap;
}

/* document */
.work { flex: 1; min-height: 0; display: flex; }
.canvas {
  flex: 1;
  min-width: 0;
  display: flex;
  flex-direction: column;
  align-items: center;
  overflow: hidden;
}
.ruler-row {
  flex: none;
  align-self: stretch;
  display: grid;
  grid-template-columns: 1fr auto 1fr;
  padding-top: 1px;
  height: 31px;
}
.tabmark { width: 4px; height: 4px; margin: 4px 0 0 5px; }
.ruler { width: 763px; height: 12px; }
.ruler-num { font-size: 6px; fill: #777; text-anchor: middle; }
.page {
  flex: 1;
  width: 763px;
  background: #fff;
  box-shadow: 0 0 2px #bbb;
}
.anchors { display: flex; justify-content: space-between; }
.anchors i { width: 5px; height: 5px; background: #999; }
.page h1 {
  padding: 77px 74px 0;
  font: bold 18px/22px "Liberation Sans", Arial, sans-serif;
  color: #000;
}
.grammar, .typo {
  text-decoration: underline wavy 1px #33f;
  text-decoration-skip-ink: none;
  text-underline-offset: 1px;
}
.typo { text-decoration-color: #f33; }
.margins { display: flex; justify-content: space-between; padding: 5px 60px 0 62px; }
.margins i { width: 12px; height: 12px; border: 1px solid #d4d4d4; border-top: 0; border-left: 0; }
.margins i + i { border-right: 0; border-left: 1px solid #d4d4d4; }
.body-text { padding: 17px 74px 0; color: #000; }
.hand { font: 200 23px/32px "Bradley Hand ITC", "DejaVu Sans Light", "DejaVu Sans", sans-serif; }
.shaded { font: 15px/18px "Liberation Serif", "Times New Roman", serif; }
.shaded mark { display: inline-block; background: #ff8000; color: #000; }
.second { padding-top: 17px; font-size: 24px; }
.mono { padding-top: 34px; font: 13px/14px "Liberation Mono", "Courier New", monospace; }
.mono p { padding-bottom: 1px; }
.mono ol { list-style: none; padding-left: 23px; }

/* scrollbar and sidebar */
.scroll { flex: none; width: 10px; display: flex; flex-direction: column; background: #f1f1f1; }
.scroll button { height: 9px; display: flex; justify-content: center; }
.scroll svg { width: 8px; height: 8px; }
.track { flex: 1; padding: 0 1px; }
.thumb { height: 39%; background: #cbcbcb; }
.sidebar {
  position: relative;
  flex: none;
  width: 25px;
  padding-left: 3px;
  border-left: 1px solid #ccc;
  background: #efefef;
}
.tab {
  width: 100%;
  height: 19px;
  display: flex;
  align-items: center;
  justify-content: center;
}
.tab:nth-of-type(2) { height: 14px; }
.tab svg { width: 12px; height: 12px; }
.handle {
  position: absolute;
  left: -1px;
  top: 207px;
  width: 4px;
  height: 39px;
  background: #606060;
}
.handle::after {
  content: "";
  position: absolute;
  left: 1px;
  top: 18px;
  border: 2px solid transparent;
  border-left-color: #fff;
  border-right: 0;
}

/* list toolbar and status bar */
.listbar { flex: none; height: 21px; padding-left: 2px; border-top: 1px solid #ccc; }
.listbar .sep { width: 3px; }
.status {
  flex: none;
  display: grid;
  grid-template-columns: 137fr 213fr 148fr 132fr 37fr 25fr 16fr 167fr 47fr 78fr 24fr;
  height: 12px;
  border-top: 1px solid #c6c6c6;
}
.status > div {
  min-width: 0;
  display: flex;
  align-items: center;
  padding-left: 5px;
  border-right: 1px solid #d2d2d2;
  white-space: nowrap;
}
.status > .mid { justify-content: center; padding: 0; }
.status > .last { border: 0; }
.status .page-no { gap: 8px; }
.selmode { width: 10px; height: 6px; }
.views svg { width: 38px; height: 9px; }
.status input {
  appearance: none;
  width: 52px;
  height: 8px;
  margin: 0;
  background: linear-gradient(#888, #888) center / 100% 1px no-repeat;
}
.status input::-webkit-slider-thumb { appearance: none; width: 1px; height: 5px; background: #666; }

/* taskbar */
.taskbar { flex: none; display: flex; height: 21px; background: #064650; color: #fff; }
.apps { flex: 0 0 706px; display: flex; }
.apps button {
  flex: 1;
  display: flex;
  align-items: center;
  justify-content: center;
  border-bottom: 1px solid transparent;
}
.apps svg { width: 12px; height: 12px; }
.apps .running { border-bottom-color: #7cc5d4; }
.apps .current { background: #1a7d8c; }
.tray { margin-left: auto; display: flex; align-items: center; gap: 3px; }
.tray svg { width: 10px; height: 10px; }
.clock {
  width: 39px;
  display: flex;
  flex-direction: column;
  align-items: center;
  justify-content: center;
}
.notify { width: 28px; display: flex; align-items: center; justify-content: center; }
.notify svg { width: 12px; height: 12px; }
```
